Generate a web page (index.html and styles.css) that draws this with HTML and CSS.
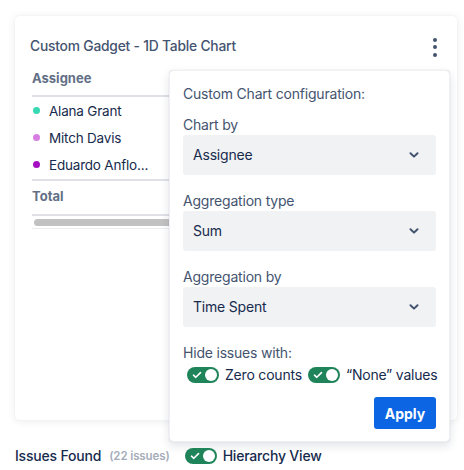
FILE: index.html
```html
<!DOCTYPE html>
<html lang="en">
<head>
<meta charset="utf-8">
<title>Custom Gadget</title>
<link rel="stylesheet" href="styles.css">
</head>
<body>
<div class="page">
  <div class="card">
    <div class="card-head">
      <div class="card-title">Custom Gadget - 1D Table Chart</div>
      <div class="kebab"><span></span><span></span><span></span></div>
    </div>
    <div class="table">
      <div class="th head">Assignee</div>
      <div class="rows">
        <div class="row"><span class="dot teal"></span>Alana Grant</div>
        <div class="row"><span class="dot lilac"></span>Mitch Davis</div>
        <div class="row"><span class="dot purple"></span>Eduardo Anflo...</div>
      </div>
      <div class="th total">Total</div>
      <div class="scroll"><div class="thumb"></div></div>
    </div>

    <div class="popover">
      <div class="pop-title">Custom Chart configuration:</div>
      <div class="label">Chart by</div>
      <div class="select"><span>Assignee</span><svg class="chev" width="10" height="6" viewBox="0 0 10 6"><path d="M1.5 1.2 L5 4.6 L8.5 1.2" fill="none" stroke="#44546f" stroke-width="2" stroke-linecap="round" stroke-linejoin="round"/></svg></div>
      <div class="label">Aggregation type</div>
      <div class="select"><span>Sum</span><svg class="chev" width="10" height="6" viewBox="0 0 10 6"><path d="M1.5 1.2 L5 4.6 L8.5 1.2" fill="none" stroke="#44546f" stroke-width="2" stroke-linecap="round" stroke-linejoin="round"/></svg></div>
      <div class="label">Aggregation by</div>
      <div class="select"><span>Time Spent</span><svg class="chev" width="10" height="6" viewBox="0 0 10 6"><path d="M1.5 1.2 L5 4.6 L8.5 1.2" fill="none" stroke="#44546f" stroke-width="2" stroke-linecap="round" stroke-linejoin="round"/></svg></div>
      <div class="label">Hide issues with:</div>
      <div class="toggles">
        <span class="toggle"><svg class="check" width="10" height="8" viewBox="0 0 10 8"><path d="M1.5 4.2 L3.8 6.3 L8.5 1.6" fill="none" stroke="#fff" stroke-width="1.6" stroke-linecap="round" stroke-linejoin="round"/></svg><span class="knob"></span></span>
        <span class="tlabel">Zero counts</span>
        <span class="toggle"><svg class="check" width="10" height="8" viewBox="0 0 10 8"><path d="M1.5 4.2 L3.8 6.3 L8.5 1.6" fill="none" stroke="#fff" stroke-width="1.6" stroke-linecap="round" stroke-linejoin="round"/></svg><span class="knob"></span></span>
        <span class="tlabel">“None” values</span>
      </div>
      <div class="actions"><button class="apply">Apply</button></div>
    </div>
  </div>

  <div class="footer">
    <span class="found">Issues Found</span>
    <span class="count">(22 issues)</span>
    <span class="toggle"><svg class="check" width="10" height="8" viewBox="0 0 10 8"><path d="M1.5 4.2 L3.8 6.3 L8.5 1.6" fill="none" stroke="#fff" stroke-width="1.6" stroke-linecap="round" stroke-linejoin="round"/></svg><span class="knob"></span></span>
    <span class="found hv">Hierarchy View</span>
  </div>
</div>
</body>
</html>
```

FILE: styles.css
```css
* { box-sizing: border-box; }
html, body { margin: 0; padding: 0; background: #ffffff; }
body {
  font-family: Inter, "Noto Sans", "Liberation Sans", sans-serif;
  color: #172b4d;
  font-size: 14px;
  line-height: 20px;
  letter-spacing: -0.2px;
}
.page { padding: 16px 7px 0 15px; }

.card {
  position: relative;
  height: 404px;
  background: #fff;
  border-radius: 4px;
  box-shadow: 0 1px 10px rgba(9, 30, 66, 0.08), 0 0 1px rgba(9, 30, 66, 0.12);
  padding: 20px 15px 0 17px;
}
.card-head {
  display: flex;
  align-items: center;
  justify-content: space-between;
  height: 20px;
  margin-left: -2px;
}
.card-title {
  font-size: 13.8px;
  font-weight: 500;
  color: #44546f;
}
.kebab {
  display: flex;
  flex-direction: column;
  gap: 3.5px;
  margin-right: 5px;
  margin-top: 2px;
}
.kebab span {
  width: 4px;
  height: 4px;
  border-radius: 50%;
  background: #44546f;
}

.table { margin-top: 12px; width: 410px; }
.th {
  font-size: 13px;
  font-weight: 700;
  color: #626f86;
  height: 20px;
  line-height: 20px;
  letter-spacing: 0;
}
.head {
  height: 29px;
  padding-bottom: 7px;
  border-bottom: 2px solid #dfe1e6;
  box-sizing: border-box;
}
.rows {
  border-bottom: 2px solid #dfe1e6;
  padding-bottom: 1px;
}
.row {
  display: flex;
  align-items: center;
  height: 27px;
  font-size: 13.5px;
  color: #172b4d;
}
.total {
  margin-top: 5px;
  height: 30px;
  padding-bottom: 8px;
  border-bottom: 2px solid #dfe1e6;
}
.dot {
  width: 7px;
  height: 7px;
  border-radius: 50%;
  margin: 0 9px 0 1px;
}
.teal { background: #36d9b4; }
.lilac { background: #d67fe0; }
.purple { background: #a40fc2; }
.scroll {
  border-bottom: 1px solid #ebecf0;
  padding: 3px 0 2px 2px;
}
.thumb {
  height: 7px;
  border-radius: 4px;
  background: #c1c1c1;
  width: 380px;
}

.popover {
  position: absolute;
  left: 154px;
  top: 54px;
  width: 281px;
  background: #fff;
  border-radius: 4px;
  border: 1px solid #eef0f2;
  box-shadow: 0 4px 10px rgba(9, 30, 66, 0.12), 0 0 1px rgba(9, 30, 66, 0.2);
  padding: 13px 13px 12px 13px;
  color: #44546f;
}
.pop-title { height: 20px; }
.label { margin-top: 11px; height: 20px; }
.select + .label { margin-top: 16px; }
.select {
  display: flex;
  align-items: center;
  justify-content: space-between;
  height: 40px;
  background: #f1f2f4;
  border-radius: 3px;
  padding: 0 17px 0 10px;
  color: #172b4d;
}
.chev { display: block; }

.toggles {
  display: flex;
  align-items: center;
  margin-top: 2px;
  padding-left: 4px;
  height: 20px;
}
.toggle {
  position: relative;
  display: inline-flex;
  align-items: center;
  width: 32px;
  height: 16px;
  border-radius: 8px;
  background: #1f845a;
  flex: none;
}
.check { position: absolute; left: 5px; top: 4px; }
.knob {
  position: absolute;
  right: 2px;
  top: 2px;
  width: 12px;
  height: 12px;
  border-radius: 50%;
  background: #fff;
}
.tlabel { margin: 0 6px 0 6px; color: #172b4d; white-space: nowrap; }

.actions { display: flex; justify-content: flex-end; margin-top: 12px; }
.apply {
  font-family: inherit;
  font-size: 14px;
  font-weight: 700;
  letter-spacing: 0;
  color: #fff;
  background: #0c66e4;
  border: none;
  border-radius: 3px;
  height: 32px;
  width: 62px;
  padding: 0;
}

.footer {
  display: flex;
  align-items: center;
  margin-top: 26px;
  height: 20px;
}
.found { font-weight: 500; color: #172b4d; }
.count {
  font-size: 11.5px;
  font-weight: 600;
  color: #a5adba;
  margin: 0 15px 0 8px;
  letter-spacing: -0.1px;
}
.hv { margin-left: 6px; }
```
